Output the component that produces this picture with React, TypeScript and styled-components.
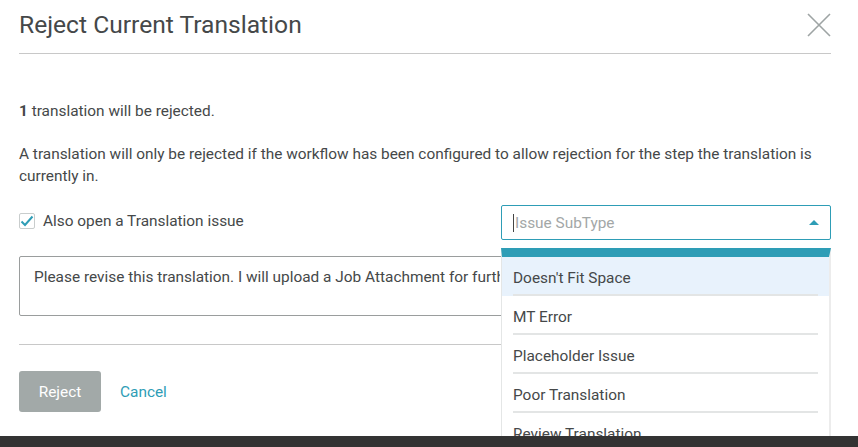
import styled, { createGlobalStyle } from 'styled-components';

const GlobalStyle = createGlobalStyle`
  html, body {
    margin: 0;
    padding: 0;
    background: #333333;
    font-family: Roboto, "Liberation Sans", Arial, sans-serif;
    color: #444;
  }
  * { box-sizing: border-box; }
`;

const Modal = styled.div`
  position: relative;
  width: 858px;
  height: 436px;
  background: #fff;
  padding: 0 27px 0 19px;
`;

const Header = styled.div`
  display: flex;
  align-items: center;
  justify-content: space-between;
  height: 54px;
  border-bottom: 1px solid #c8c8c8;
`;

const Title = styled.h1`
  margin: -5px 0 0;
  font-size: 24.6px;
  font-weight: 400;
  color: #454849;
`;

const CloseButton = styled.button`
  border: 0;
  background: none;
  padding: 0;
  width: 24px;
  height: 24px;
  margin-top: -4px;
  cursor: pointer;
`;

const Body = styled.div`
  padding-top: 46px;
  font-size: 15.4px;
  line-height: 22px;
  color: #454849;
`;

const Para = styled.p<{ $gap?: number }>`
  margin: 0 0 ${(p) => p.$gap ?? 0}px;
`;

const OptionRow = styled.div`
  display: flex;
  align-items: center;
  justify-content: space-between;
  margin-top: 18px;
`;

const CheckLabel = styled.label`
  display: flex;
  align-items: center;
  gap: 8px;
  margin-top: -4px;
`;

const Box = styled.span`
  width: 16px;
  height: 16px;
  border: 1px solid #c9cdcd;
  border-radius: 2px;
  display: flex;
  align-items: center;
  justify-content: center;
`;

const SelectBox = styled.div`
  width: 330px;
  height: 35px;
  border: 1px solid #2e9db6;
  border-radius: 2px;
  display: flex;
  align-items: center;
  justify-content: space-between;
  padding: 0 11px;
  color: #a3a7a7;
`;

const Placeholder = styled.span`
  border-left: 1px solid #444;
  padding-left: 1px;
  line-height: 18px;
`;

const Caret = styled.span`
  width: 0;
  height: 0;
  border-left: 5px solid transparent;
  border-right: 5px solid transparent;
  border-bottom: 5px solid #2e9db6;
`;

const Comment = styled.div`
  margin-top: 16px;
  height: 60px;
  border: 1px solid #9a9d9d;
  border-radius: 2px;
  padding: 9px 14px;
`;

const CommentText = styled.div`
  width: 466px;
  white-space: nowrap;
  overflow: hidden;
`;

const Divider = styled.div`
  margin-top: 28px;
  border-top: 1px solid #c8c8c8;
`;

const Footer = styled.div`
  display: flex;
  align-items: center;
  gap: 19px;
  padding-top: 26px;
`;

const RejectButton = styled.button`
  width: 82px;
  height: 41px;
  border: 0;
  border-radius: 3px;
  background: #a2a9a8;
  color: #fff;
  font: inherit;
  font-size: 15.4px;
`;

const CancelLink = styled.a`
  color: #2e9db6;
  font-size: 15.4px;
  text-decoration: none;
`;

const Menu = styled.div`
  position: absolute;
  left: 501px;
  top: 248px;
  width: 330px;
  height: 199px;
  background: #fff;
  border-top: 9px solid #2e9db6;
  border-right: 2px solid #ececec;
  border-left: 1px solid #e4e6e6;
  overflow: hidden;
  font-size: 15.4px;
  color: #454849;
`;

const Thumb = styled.div`
  position: absolute;
  right: 0;
  top: 0;
  width: 2px;
  height: 60px;
  background: #a8a8a8;
`;

const Item = styled.div<{ $active?: boolean }>`
  height: 39px;
  display: flex;
  align-items: center;
  padding: 2px 11px 0;
  background: ${(p) => (p.$active ? '#e8f2fc' : '#fff')};
  position: relative;
  &::after {
    content: '';
    position: absolute;
    left: 11px;
    right: 11px;
    bottom: 0;
    height: 2px;
    background: #e3e5e5;
  }
`;

const items = ["Doesn't Fit Space", 'MT Error', 'Placeholder Issue', 'Poor Translation', 'Review Translation'];

export default function App() {
  return (
    <>
      <GlobalStyle />
      <Modal>
        <Header>
          <Title>Reject Current Translation</Title>
          <CloseButton aria-label="Close">
            <svg width="24" height="24" viewBox="0 0 24 24">
              <path d="M1 1 L23 23 M23 1 L1 23" stroke="#9ea4a4" strokeWidth="1.6" />
            </svg>
          </CloseButton>
        </Header>
        <Body>
          <Para $gap={21}>
            <b>1</b> translation will be rejected.
          </Para>
          <Para>
            A translation will only be rejected if the workflow has been configured to allow rejection for the step the
            translation is currently in.
          </Para>
          <OptionRow>
            <CheckLabel>
              <Box>
                <svg width="14" height="12" viewBox="0 0 14 12">
                  <path d="M1.5 6.5 L5 10 L12.5 1.5" fill="none" stroke="#2e9db6" strokeWidth="2" />
                </svg>
              </Box>
              Also open a Translation issue
            </CheckLabel>
            <SelectBox>
              <Placeholder>Issue SubType</Placeholder>
              <Caret />
            </SelectBox>
          </OptionRow>
          <Comment>
            <CommentText>Please revise this translation. I will upload a Job Attachment for further comments.</CommentText>
          </Comment>
          <Divider />
          <Footer>
            <RejectButton>Reject</RejectButton>
            <CancelLink href="#">Cancel</CancelLink>
          </Footer>
        </Body>
        <Menu>
          <Thumb />
          {items.map((it, i) => (
            <Item key={it} $active={i === 0}>
              {it}
            </Item>
          ))}
        </Menu>
      </Modal>
    </>
  );
}
